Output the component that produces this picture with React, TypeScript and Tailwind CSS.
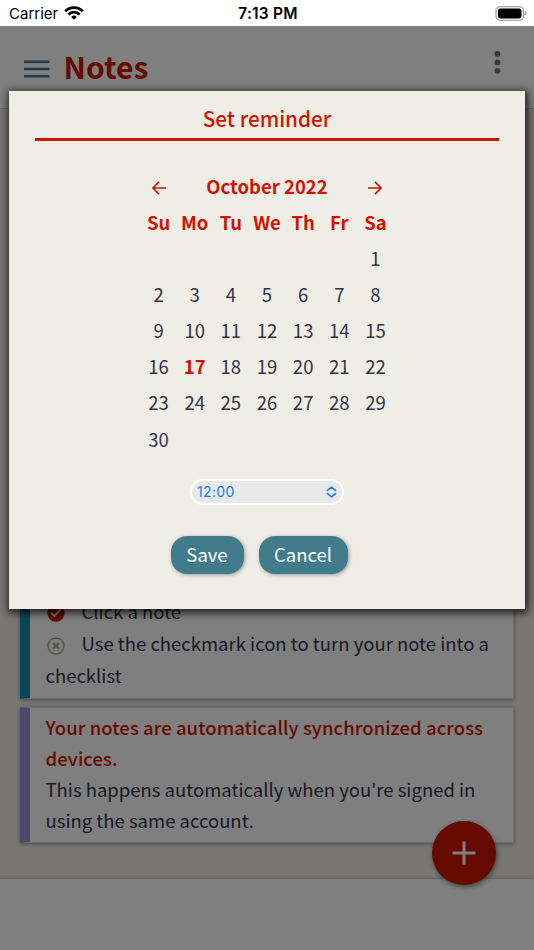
import type { ReactNode } from 'react'

const weekdays = ['Su', 'Mo', 'Tu', 'We', 'Th', 'Fr', 'Sa']
const firstWeekday = 6
const daysInMonth = 30
const today = 17

function StatusBar() {
    return (
        <div className="flex h-[26px] items-center justify-between bg-white pl-[9px] pr-[7px] font-['Inter','Liberation_Sans',sans-serif] text-black">
            <div className="flex flex-1 items-center gap-[6px]">
                <span className="pt-[2px] text-[15px] leading-[26px]">Carrier</span>
                <svg width="20" height="14" viewBox="0 0 20 14" fill="none" stroke="black" strokeWidth="2.8">
                    <path d="M1.2 5.2a12.6 12.6 0 0 1 17.6 0" />
                    <path d="M4.3 8.4a8.1 8.1 0 0 1 11.4 0" />
                    <path d="M10 13.8 7.1 10.9a4.2 4.2 0 0 1 5.8 0Z" fill="black" stroke="none" />
                </svg>
            </div>
            <span className="pt-[2px] text-[15.5px] font-semibold leading-[26px] tracking-[0.2px]">7:13 PM</span>
            <div className="flex flex-1 justify-end">
                <svg width="32" height="15" viewBox="0 0 32 15">
                    <rect x="1" y="0.7" width="27.4" height="13.6" rx="4" fill="none" stroke="#8e8e8e" strokeWidth="1.1" />
                    <rect x="2.9" y="2.6" width="23.6" height="9.8" rx="2.4" fill="black" />
                    <path d="M29.8 5.2v4.6c1-.4 1.6-1.3 1.6-2.3s-.6-1.9-1.6-2.3Z" fill="#8e8e8e" />
                </svg>
            </div>
        </div>
    )
}

function Header() {
    return (
        <header className="flex h-[83px] items-start justify-between border-b border-[#dcdad2] bg-white pl-[23.5px] pr-[33px] pt-[25px]">
            <div className="-mt-[2px] flex items-center gap-[14px]">
                <svg width="26" height="20" viewBox="0 0 26 20" fill="#427c8c" className="mt-[6px]">
                    <rect y="1.5" width="25.5" height="2.6" />
                    <rect y="8.7" width="25.5" height="2.6" />
                    <rect y="15.9" width="25.5" height="2.6" />
                </svg>
                <h1 className="text-[30px] font-bold leading-[34px] text-[#cc1500]">Notes</h1>
            </div>
            <svg width="7" height="24" viewBox="0 0 7 24" fill="#6e727b">
                <circle cx="3.5" cy="3" r="2.9" />
                <circle cx="3.5" cy="11.4" r="2.9" />
                <circle cx="3.5" cy="19.8" r="2.9" />
            </svg>
        </header>
    )
}

function Note({ accent, children }: { accent: string; children: ReactNode }) {
    return (
        <article
            className={`border-y border-r border-l-[10px] border-y-[#e2e0d8] border-r-[#e2e0d8] bg-white pl-[15.5px] pr-5 shadow-[0_1px_4px_rgba(0,0,0,0.4)] ${accent}`}
        >
            {children}
        </article>
    )
}

function CheckedIcon() {
    return (
        <svg width="20" height="20" viewBox="0 0 20 20" className="mr-4 inline-block align-[-4px]">
            <circle cx="10" cy="10" r="8.7" fill="#cc1500" />
            <path d="m5.2 9.8 3.4 3.200 6-6.600" fill="none" stroke="white" strokeWidth="1.8" />
        </svg>
    )
}

function UncheckedIcon() {
    return (
        <svg width="20" height="20" viewBox="0 0 20 20" className="mr-4 inline-block align-[-4.5px]" fill="none" stroke="#a3a198">
            <circle cx="10" cy="10" r="8" strokeWidth="1.4" />
            <path d="m7 7 6 6m0-6-6 6" strokeWidth="1.8" />
        </svg>
    )
}

function Calendar() {
    return (
        <div className="mx-auto w-[253px] text-center text-[18.5px] leading-[35px]">
            <div className="flex h-9 items-center justify-between px-[11px] font-bold text-[#d01400]">
                <svg width="14" height="14" viewBox="0 0 14 14" fill="none" stroke="currentColor" strokeWidth="1.7" className="mt-[3px]">
                    <path d="M14 7H1M7 .8.9 7 7 13.2" />
                </svg>
                <span>October 2022</span>
                <svg width="14" height="14" viewBox="0 0 14 14" fill="none" stroke="currentColor" strokeWidth="1.7" className="mt-[3px]">
                    <path d="M0 7h13M7 .8 13.1 7 7 13.2" />
                </svg>
            </div>
            <div className="grid auto-rows-[36.1px] grid-cols-7 leading-[37px]">
                {weekdays.map((day) => (
                    <span key={day} className="font-bold text-[#d01400]">{day}</span>
                ))}
                {Array.from({ length: firstWeekday }, (_, i) => (
                    <span key={`blank-${i}`} />
                ))}
                {Array.from({ length: daysInMonth }, (_, i) => i + 1).map((day) => (
                    <span key={day} className={day === today ? 'font-bold text-[#d01400]' : 'text-[#33334a]'}>
                        {day}
                    </span>
                ))}
            </div>
        </div>
    )
}

function ReminderDialog() {
    return (
        <div className="absolute left-[9px] top-[65px] flex h-[518px] w-[516px] flex-col bg-[#efeee6] px-[26px] shadow-[1px_2px_8px_2px_rgba(0,0,0,0.75)]">
            <h2 className="h-[50px] border-b-[3px] border-[#d01400] pt-[11px] text-center text-[20.7px] font-medium leading-8 text-[#d01400]">
                Set reminder
            </h2>
            <div className="pt-[27px]">
                <Calendar />
            </div>
            <button className="mx-auto mt-[22px] flex h-[26px] w-[154px] items-center justify-between rounded-full border-2 border-white bg-[#e9e9e9] px-[5px] font-['Inter','Liberation_Sans',sans-serif] text-[14px] tracking-[0.35px] text-[#1480f5]">
                <span>12:00</span>
                <svg width="11" height="12" viewBox="0 0 11 12" fill="none" stroke="currentColor" strokeWidth="1.7" strokeLinecap="round" strokeLinejoin="round">
                    <path d="m1.4 4.3 4.100-3.200 4.100 3.200M1.4 7.7l4.100 3.200 4.100-3.200" />
                </svg>
            </button>
            <div className="mt-[31px] flex gap-[15px] pl-[135.5px]">
                <button className="h-[38px] w-[73px] rounded-[16px] bg-[#427c8c] text-[18.5px] text-white shadow-[1px_1px_4px_rgba(0,0,0,0.35)]">Save</button>
                <button className="h-[38px] w-[89px] rounded-[16px] bg-[#427c8c] text-[18.5px] text-white shadow-[1px_1px_4px_rgba(0,0,0,0.35)]">Cancel</button>
            </div>
        </div>
    )
}

export default function App() {
    return (
        <div className="h-[950px] w-[534px] overflow-hidden font-['Noto_Sans_CJK_SC','Noto_Sans',sans-serif] text-[#33334a]">
            <StatusBar />
            <div className="relative flex h-[924px] flex-col">
                <Header />
                <main className="flex flex-1 flex-col justify-end gap-2 bg-[#f0eee6] pb-[36px] pl-5 pr-5">
                    <Note accent="border-l-[#1290ae]">
                        <ul className="-mr-2 pb-[7px] text-[18.5px] leading-8">
                            <li><CheckedIcon />Click a note</li>
                            <li><UncheckedIcon />Use the checkmark icon to turn your note into a checklist</li>
                        </ul>
                    </Note>
                    <Note accent="border-l-[#9694d4]">
                        <div className="pb-[6px] pt-[4px] text-[18.5px] leading-[31px]">
                            <h3 className="font-medium tracking-[0.06px] text-[#cc1500]">Your notes are automatically synchronized across devices.</h3>
                            <p>This happens automatically when you're signed in using the same account.</p>
                        </div>
                    </Note>
                </main>
                <footer className="h-[71px] bg-white shadow-[0_-1px_3px_rgba(0,0,0,0.2)]" />
                <button className="absolute bottom-[65px] right-[38px] flex size-16 items-center justify-center rounded-full bg-[#cc1500] shadow-[1px_2px_5px_rgba(0,0,0,0.5)]">
                    <svg width="24" height="24" viewBox="0 0 24 24" stroke="white" strokeWidth="3">
                        <path d="M12 .5v23M.5 12h23" />
                    </svg>
                </button>
                <div className="absolute inset-0 bg-black/50" />
                <ReminderDialog />
            </div>
        </div>
    )
}
